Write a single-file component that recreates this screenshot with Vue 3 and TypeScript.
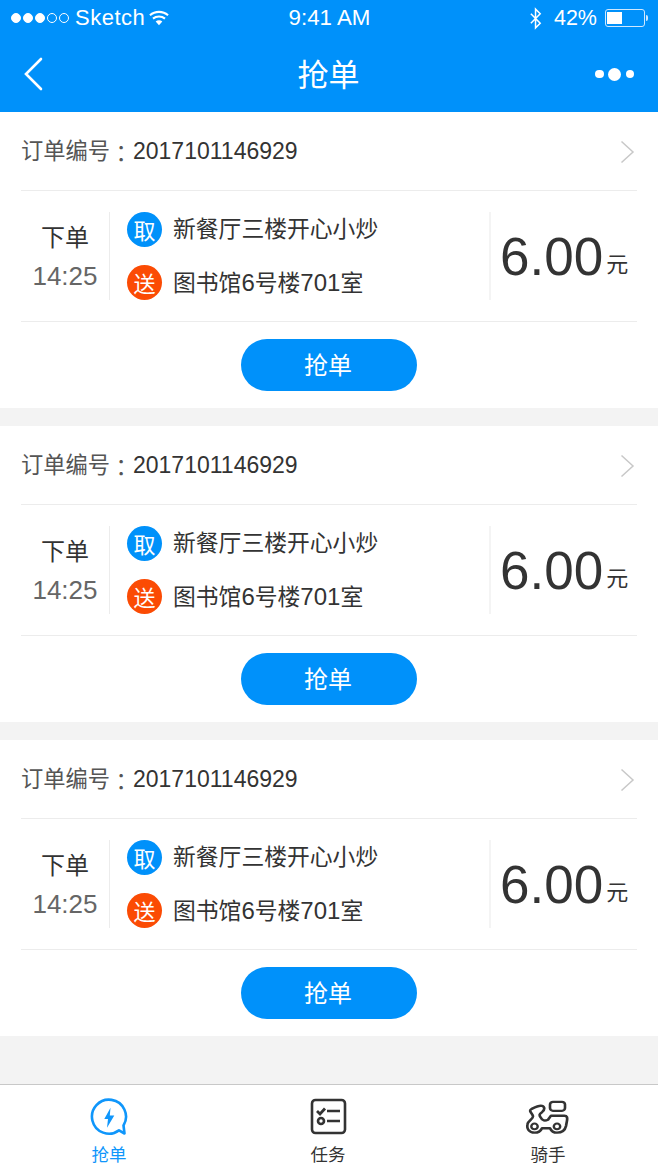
<script setup lang="ts">
const orders = [1, 2, 3].map((id) => ({
  id,
  no: '2017101146929',
  time: '14:25',
  from: '新餐厅三楼开心小炒',
  price: '6.00',
}))
</script>

<template>
  <div class="page">
    <header class="top">
      <div class="status">
        <div class="status-left">
          <span class="signal">
            <i class="on"></i><i class="on"></i><i class="on"></i><i></i><i></i>
          </span>
          <span class="carrier">Sketch</span>
          <svg class="wifi" width="20" height="16" viewBox="0 0 21 16">
            <path d="M1 5.200C6.400.4 14.600.4 20 5.200" fill="none" stroke="#fff" stroke-width="2.200" />
            <path d="M4.200 8.600c3.600-3 9-3 12.600 0" fill="none" stroke="#fff" stroke-width="2.200" />
            <path d="M7 11.600c2-1.600 5-1.600 7 0l-3.500 3.900z" fill="#fff" />
          </svg>
        </div>
        <span class="clock">9:41 AM</span>
        <div class="status-right">
          <svg class="bt" width="14" height="23" viewBox="0 0 15 24">
            <path d="M2 7l10 10-5 5V2l5 5L2 17" fill="none" stroke="#fff" stroke-width="1.600" />
          </svg>
          <span class="pct">42%</span>
          <span class="battery"><span class="level"></span></span>
          <span class="nub"></span>
        </div>
      </div>
      <div class="nav">
        <svg class="back" width="20" height="34" viewBox="0 0 20 34">
          <path d="M18 2 3 17l15 15" fill="none" stroke="#fff" stroke-width="2.600" stroke-linecap="round" />
        </svg>
        <h1 class="title">抢单</h1>
        <span class="more"><i></i><i class="big"></i><i></i></span>
      </div>
    </header>

    <main class="list">
      <section v-for="o in orders" :key="o.id" class="card">
        <div class="order-row">
          <span class="order-label">订单编号<span class="colon">：</span></span>
          <span class="order-no">{{ o.no }}</span>
          <svg class="chev" width="15" height="24" viewBox="0 0 15 24">
            <path d="M1.500 1.500 13 12 1.500 22.500" fill="none" stroke="#c8c8c8" stroke-width="1.500" />
          </svg>
        </div>
        <div class="body">
          <div class="time">
            <span class="time-label">下单</span>
            <span class="time-val">{{ o.time }}</span>
          </div>
          <div class="route">
            <div class="stop">
              <span class="badge take">取</span>
              <span class="place">{{ o.from }}</span>
            </div>
            <div class="stop stop-to">
              <span class="badge send">送</span>
              <span class="place">图书馆<span class="num">6</span>号楼<span class="num">701</span>室</span>
            </div>
          </div>
          <div class="price">
            <span class="amount">{{ o.price }}</span>
            <span class="unit">元</span>
          </div>
        </div>
        <div class="action">
          <button class="grab" type="button">抢单</button>
        </div>
      </section>
    </main>

    <nav class="tabs">
      <div class="tab active">
        <svg width="40" height="40" viewBox="0 0 40 40">
          <path d="M30 32.400A17 17 0 1 1 34.500 27.500L35.500 35.500Z" fill="none" stroke="#0f96fb" stroke-width="2.600" stroke-linejoin="round" />
          <path d="M21.500 9.700 15.300 21H19L18 29.700 25.300 17.500H20.800Z" fill="#0f96fb" />
        </svg>
        <span>抢单</span>
      </div>
      <div class="tab">
        <svg width="40" height="40" viewBox="0 0 40 40">
          <rect x="4" y="2" width="33" height="33" rx="3.500" fill="none" stroke="#333" stroke-width="2.600" />
          <path d="M9 13l3 3 5-5.500" fill="none" stroke="#333" stroke-width="2.800" />
          <path d="M19 13h13M19 23h13" stroke="#333" stroke-width="2.400" />
          <circle cx="13" cy="23" r="3" fill="none" stroke="#333" stroke-width="2.600" />
        </svg>
        <span>任务</span>
      </div>
      <div class="tab">
        <svg width="44" height="40" viewBox="0 0 44 40">
          <g transform="translate(-1 1.200) scale(1 .892)">
            <rect x="25" y="3" width="15" height="10" rx="3" fill="none" stroke="#333" stroke-width="2.600" />
            <path d="M6.500 11C10 9 14 6.500 17 7.500C20 8.500 20 12 17 14.500C14 16.500 14 18 16 21C17 24 20 24.500 23 23L26 18.500H39.500C42 18.500 42.500 20.500 42 24L41 30C40 35 37 37.500 32 37.500C28 37.500 26 35 25 32.500H17C16 35 13.500 37.500 9.500 37.500C4 37.500 1.500 33 2.500 28C3 24 8.500 22 8 19C7.500 16 3 13 6.500 11Z" fill="none" stroke="#333" stroke-width="2.700" stroke-linejoin="round" />
            <circle cx="9.500" cy="30.500" r="3.200" fill="none" stroke="#333" stroke-width="2.400" />
            <circle cx="32" cy="30.500" r="3.200" fill="none" stroke="#333" stroke-width="2.400" />
          </g>
        </svg>
        <span>骑手</span>
      </div>
    </nav>
  </div>
</template>

<style>
html, body { margin: 0; padding: 0; }
</style>

<style scoped>
.page {
  width: 658px;
  height: 1170px;
  display: flex;
  flex-direction: column;
  background: #f3f3f3;
  font-family: "Liberation Sans", "Noto Sans CJK SC", sans-serif;
  color: #333;
  overflow: hidden;
}
.top { height: 112px; background: #0091fa; color: #fff; flex: none; }
.status {
  height: 36px;
  display: grid;
  grid-template-columns: 1fr auto 1fr;
  align-items: center;
  font-size: 22px;
  padding: 0 10px 0 11px;
}
.status-left, .status-right { display: flex; align-items: center; }
.status-right { justify-content: flex-end; }
.signal { display: flex; gap: 2px; }
.signal i { width: 10px; height: 10px; border-radius: 50%; border: 1px solid #fff; box-sizing: border-box; }
.signal i.on { background: #fff; }
.carrier { margin-left: 6px; letter-spacing: 0.5px; }
.wifi { margin-left: 4px; }
.clock { font-size: 22.300px; }
.bt { margin-right: 11px; }
.pct { margin-right: 8px; font-size: 21.500px; }
.battery {
  width: 36px; height: 12px; border: 1px solid #cfe8ff; border-radius: 3px;
  padding: 2px 1px; box-sizing: content-box; display: flex;
}
.level { width: 15px; background: #fff; }
.nub { width: 2px; height: 6px; background: #cfe8ff; margin-left: 1px; border-radius: 0 2px 2px 0; }
.nav {
  height: 76px;
  display: grid;
  grid-template-columns: 1fr auto 1fr;
  align-items: center;
  padding: 0 24px 0 23px;
}
.back { margin-top: -1px; }
.title { margin: 0 0 3px; font-size: 31px; font-weight: 400; }
.more { justify-self: end; display: flex; align-items: center; gap: 4.500px; }
.more i { width: 8.500px; height: 8.500px; border-radius: 50%; background: #fff; }
.more i.big { width: 13px; height: 13px; }
.list { display: flex; flex-direction: column; gap: 18px; flex: none; }
.card { background: #fff; height: 296px; padding: 0 21px; box-sizing: border-box; display: flex; flex-direction: column; }
.order-row {
  height: 78px; flex: none; display: flex; align-items: center;
  border-bottom: 1px solid #ececec; box-sizing: content-box;
}
.order-label { font-size: 22.250px; color: #555; width: 112px; margin-bottom: 2px; white-space: nowrap; }
.colon { font-family: "Noto Sans CJK TC", sans-serif; vertical-align: -3px; }
.order-no { font-size: 23px; color: #333; margin-top: 1px; }
.chev { margin-left: auto; margin-right: 2px; margin-top: 1px; }
.body { height: 130px; flex: none; display: flex; align-items: center; border-bottom: 1px solid #ececec; }
.time {
  width: 88px; height: 88px; flex: none; border-right: 1px solid #ececec;
  display: flex; flex-direction: column; align-items: center; justify-content: center; gap: 6px;
}
.time-label { font-size: 24px; line-height: 34px; color: #333; }
.time-val { font-size: 26px; line-height: 30px; color: #666; }
.route { width: 381px; height: 88px; flex: none; display: flex; flex-direction: column; padding-left: 17px; box-sizing: border-box; border-right: 2px solid #f4f4f4; }
.stop { display: flex; align-items: center; gap: 11px; height: 35px; }
.stop-to { margin-top: 18px; }
.stop-to .place { padding-bottom: 3px; }
.badge {
  width: 35px; height: 35px; border-radius: 50%; color: #fff; font-size: 22px;
  display: flex; align-items: center; justify-content: center; flex: none; padding-bottom: 1px; box-sizing: border-box;
}
.take { background: #0091fa; }
.send { background: #fb4b04; }
.place { font-size: 22.800px; color: #333; padding-bottom: 4px; }
.num { font-size: 24px; }
.price { display: flex; align-items: flex-end; padding: 2px 0 0 9px; color: #333; }
.amount { font-size: 53px; line-height: 60px; }
.unit { font-size: 22px; line-height: 26px; margin: 0 0 9px 3px; }
.action { flex: 1; display: flex; justify-content: center; align-items: center; }
.grab {
  width: 176px; height: 52px; border: 0; border-radius: 26px; background: #0091fa; color: #fff;
  font: 400 24px "Liberation Sans", "Noto Sans CJK SC", sans-serif; padding: 0 2px 3px 0;
}
.tabs {
  margin-top: auto; height: 85px; flex: none; background: #fff;
  border-top: 1px solid #c8c8c8; display: grid; grid-template-columns: 218px 220px 220px;
  box-sizing: content-box;
}
.tab { display: flex; flex-direction: column; align-items: center; padding-top: 13px; color: #333; font-size: 17.500px; line-height: 22px; }
.tab svg { display: block; height: 40px; margin-bottom: 6px; }
.tab.active { color: #0f96fb; }
</style>
